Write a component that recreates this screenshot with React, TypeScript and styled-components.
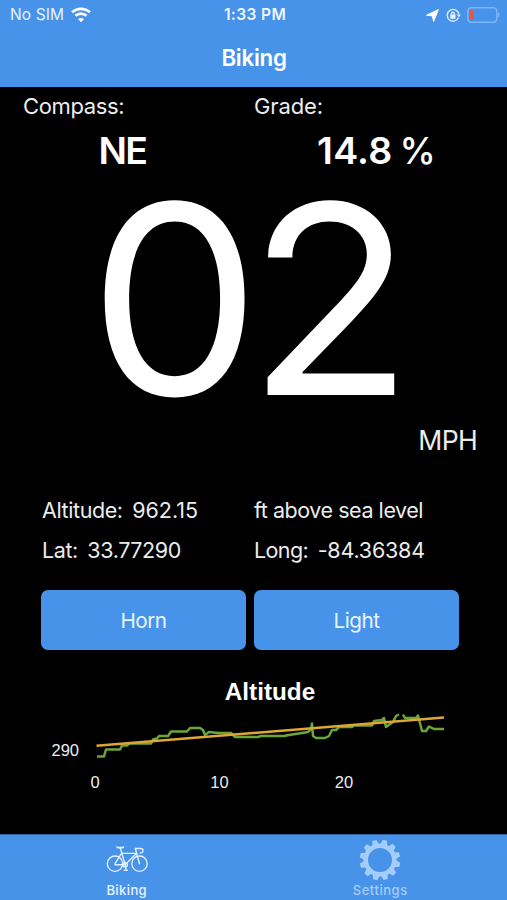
import React from "react";
import styled, { createGlobalStyle } from "styled-components";

const BLUE = "#4893ea";

const GlobalStyle = createGlobalStyle`
  * { box-sizing: border-box; }
  html, body { margin: 0; background: #000; }
  body { font-family: Inter, "Liberation Sans", sans-serif; color: #fff; }
`;

const Screen = styled.div`
  width: 507px;
  height: 900px;
  overflow: hidden;
  display: flex;
  flex-direction: column;
  background: #000;
`;

const Header = styled.header`
  height: 87px;
  flex: none;
  background: ${BLUE};
`;

const StatusBar = styled.div`
  height: 30px;
  padding: 0 7px 0 10px;
  display: grid;
  grid-template-columns: 1fr auto 1fr;
  align-items: center;
  font-size: 15.5px;
  line-height: 30px;
`;

const Carrier = styled.div`
  display: flex;
  align-items: center;
  gap: 7px;
  color: #e6f2ff;
  letter-spacing: 0.1px;
`;

const Clock = styled.div`
  font-weight: 600;
  letter-spacing: 0.4px;
  color: #edf6ff;
`;

const StatusIcons = styled.div`
  display: flex;
  align-items: center;
  justify-content: flex-end;
  gap: 6.5px;
`;

const NavTitle = styled.h1`
  margin: 0;
  height: 56px;
  line-height: 56px;
  padding-left: 1px;
  text-align: center;
  font-size: 22.3px;
  font-weight: 600;
  letter-spacing: -0.25px;
`;

const Main = styled.main`
  flex: 1;
  display: flex;
  flex-direction: column;
`;

const Readings = styled.section`
  height: 86px;
  padding: 6px 22px 0 23px;
  display: grid;
  grid-template-columns: 231px 231px;
  grid-template-rows: 26px 54px;
`;

const Label = styled.div<{ $spacing?: number }>`
  font-size: 22px;
  line-height: 26px;
  letter-spacing: ${(p) => p.$spacing ?? 0}px;
  white-space: nowrap;
  color: #ececec;
`;

const Reading = styled.div<{ $spacing: number; $width: number }>`
  width: ${(p) => p.$width}px;
  padding-top: 9px;
  display: flex;
  justify-content: center;
  gap: 7px;
  font-size: 37.5px;
  font-weight: 600;
  line-height: 46px;
  letter-spacing: ${(p) => p.$spacing}px;
  white-space: nowrap;
`;

const Percent = styled.span`
  font-size: 36.5px;
  font-weight: 500;
`;

const Speed = styled.div`
  height: 252px;
  line-height: 252px;
  padding-right: 18px;
  text-align: center;
  font-size: 264px;
  font-weight: 400;
  letter-spacing: -13.3px;
  transform: scaleX(1.035);
`;

const Unit = styled.div`
  height: 32px;
  line-height: 31px;
  padding-right: 30px;
  text-align: right;
  font-size: 26.6px;
  letter-spacing: -0.7px;
  color: #ececec;
`;

const Details = styled.section`
  margin: 36px 42px 0;
  display: grid;
  grid-template-columns: 212px 1fr;
  grid-auto-rows: 40px;
`;

const Detail = styled.div`
  display: flex;
  gap: 9.5px;
  font-size: 21.5px;
  line-height: 34px;
  white-space: nowrap;
  color: #ececec;
`;

const DetailText = styled.span<{ $spacing?: number }>`
  letter-spacing: ${(p) => p.$spacing ?? -0.4}px;
`;

const Actions = styled.section`
  margin: 17px 48px 0 41px;
  display: grid;
  grid-template-columns: 205px 205px;
  gap: 8px;
`;

const ActionButton = styled.button`
  height: 60px;
  border: 0;
  border-radius: 7px;
  padding: 0;
  background: ${BLUE};
  color: #e6f5ff;
  font: 400 20.7px Inter, "Liberation Sans", sans-serif;
  letter-spacing: -0.5px;
`;

const ChartCard = styled.section`
  font-family: "Liberation Sans", Arial, sans-serif;
`;

const ChartTitle = styled.h2`
  margin: 27px 0 0;
  padding-left: 33px;
  font-size: 24.3px;
  line-height: 30px;
  font-weight: 700;
  text-align: center;
`;

const Plot = styled.div`
  margin-top: 1px;
  display: grid;
  grid-template-columns: 79px 348px;
  column-gap: 17px;
`;

const YTick = styled.div`
  padding-top: 32px;
  text-align: right;
  font-size: 16.5px;
  line-height: 20px;
  color: #ececec;
`;

const XAxis = styled.div`
  margin: 8px 0 0 70px;
  display: grid;
  grid-template-columns: 50px 1fr 50px;
  width: 299px;
  text-align: center;
  font-size: 16.5px;
  line-height: 20px;
  color: #ececec;
`;

const TabBar = styled.nav`
  height: 66px;
  flex: none;
  display: grid;
  grid-template-columns: 1fr 1fr;
  background: ${BLUE};
  border-top: 1px solid #2b62a2;
`;

const Tab = styled.div<{ $active?: boolean }>`
  display: flex;
  flex-direction: column;
  align-items: center;
  color: ${(p) => (p.$active ? "#e8f4ff" : "#a5cdf9")};
  font-size: 13px;
  font-weight: 500;
  line-height: 16px;
  letter-spacing: ${(p) => (p.$active ? 0.4 : 0.55)}px;
`;

const TabIcon = styled.div<{ $active?: boolean }>`
  height: 47px;
  padding-top: ${(p) => (p.$active ? 0 : 2)}px;
  padding-left: ${(p) => (p.$active ? 2 : 0)}px;
  display: flex;
  align-items: center;
`;

const WifiIcon = () => (
  <svg width="20" height="16" viewBox="0 0 20 16" fill="none" stroke="#fff" strokeWidth="2.7">
    <path d="M1.1 5.3C6.1.6 13.9.6 18.9 5.3" />
    <path d="M4.5 8.8c3.2-2.9 7.8-2.9 11 0" />
    <path d="M10 15.2l-3-3.1c1.8-1.5 4.2-1.5 6 0z" fill="#fff" stroke="none" />
  </svg>
);

const LocationIcon = () => (
  <svg width="13" height="13" viewBox="0 0 13 13">
    <path d="M12.4.6L7.6 12.4 6.4 6.9.6 6.2z" fill="#fff" stroke="#fff" strokeWidth="1" strokeLinejoin="round" />
  </svg>
);

const RotationLockIcon = () => (
  <svg width="15" height="15" viewBox="0 0 15 15" fill="none" stroke="#d8eaff" strokeWidth="1.4">
    <path d="M12.5 9.8A5.9 5.9 0 1 1 12.9 6" />
    <path d="M10.7 6.5h4.3l-2.1 3z" fill="#d8eaff" stroke="none" />
    <rect x="4.3" y="6.5" width="5.2" height="4.2" rx=".6" fill="#e8f4ff" stroke="none" />
    <path d="M5.4 7V5.7a1.5 1.5 0 0 1 3 0V7" />
  </svg>
);

const BatteryIcon = () => (
  <svg width="33" height="17" viewBox="0 0 33 17">
    <rect x=".8" y=".8" width="29" height="14.5" rx="3.5" fill="none" stroke="#7db6f7" strokeWidth="1.5" />
    <rect x="2.8" y="3" width="3.8" height="10" rx="1.3" fill="#e35749" />
    <path d="M31.2 5.5v5c2-.6 2-4.4 0-5z" fill="#7db6f7" />
  </svg>
);

const BikeIcon = () => (
  <svg width="43" height="28" viewBox="0 0 43 28" fill="none" stroke="#e3f1ff" strokeWidth="1.35" strokeLinejoin="round" strokeLinecap="round">
    <circle cx="9" cy="18.7" r="7.7" />
    <circle cx="33.5" cy="18.7" r="7.7" />
    <path d="M9 18.7L15.5 8.3H30.7L19.2 19.7H9" />
    <path d="M14.2 2.6L19.2 19.7M33.5 18.7L29.3 3.5H35c2.5 0 2.8 4.3.2 4.3h-1.2" />
    <path d="M11.3 2.3c2 .5 4.4.4 6 0" strokeWidth="1.9" />
    <circle cx="19.2" cy="19.7" r="2.2" />
    <path d="M19.2 19.7l.8 5.2M18.3 25.2h3" />
  </svg>
);

const TEETH = Array.from({ length: 12 }, (_, i) => i * 30 + 14);

const GearIcon = () => (
  <svg width="42" height="42" viewBox="-21 -21 42 42">
    <circle r="14.3" fill="none" stroke="#a5cdf9" strokeWidth="4.6" />
    {TEETH.map((angle) => (
      <path key={angle} transform={`rotate(${angle})`} d="M-3.3-15.8L-2.2-20.3H2.2L3.3-15.8z" fill="#a5cdf9" />
    ))}
  </svg>
);

const AltitudeChart = () => (
  <svg width="348" height="56" viewBox="96 708 348 56" fill="none" strokeWidth="2.5" strokeLinejoin="round">
    <path
      stroke="#6aa638"
      d="M97 756.5H104L106 749.5H120L122 745.5H127L129 743.5H151L153 739.5L157 738.5L159 736H168L171 731.5H187L190 728H200L203 730L205 735L209 732L218 733H231L235 737H243L254 737H258L261 736H284L289 735L302 733L308 732L311 729.5L312 723.5L313 736L316 738H325L329 736L332 730H336L339 727H352L354 725.5H372L374 721L382 720L384 718L386 727L393 722L396 716L399 714.5M403 714.5L405 718H416L418 715.5L422 731H426L429 726.5L434 729H444"
    />
    <path stroke="#dda637" d="M96.5 745.7L444 717.5" />
  </svg>
);

export default function App() {
  return (
    <>
      <GlobalStyle />
      <Screen>
        <Header>
          <StatusBar>
            <Carrier>No SIM<WifiIcon /></Carrier>
            <Clock>1:33 PM</Clock>
            <StatusIcons>
              <LocationIcon />
              <RotationLockIcon />
              <BatteryIcon />
            </StatusIcons>
          </StatusBar>
          <NavTitle>Biking</NavTitle>
        </Header>
        <Main>
          <Readings>
            <Label $spacing={-0.35}>Compass:</Label>
            <Label $spacing={-0.1}>Grade:</Label>
            <Reading $width={199} $spacing={-1.6}>NE</Reading>
            <Reading $width={245} $spacing={0.2}>
              <span>14.8</span>
              <Percent>%</Percent>
            </Reading>
          </Readings>
          <Speed>02</Speed>
          <Unit>MPH</Unit>
          <Details>
            <Detail><DetailText>Altitude:</DetailText><DetailText $spacing={0}>962.15</DetailText></Detail>
            <Detail><DetailText $spacing={-0.45}>ft above sea level</DetailText></Detail>
            <Detail><DetailText>Lat:</DetailText><DetailText $spacing={-0.4}>33.77290</DetailText></Detail>
            <Detail><DetailText $spacing={-0.6}>Long:</DetailText><DetailText $spacing={-0.2}>-84.36384</DetailText></Detail>
          </Details>
          <Actions>
            <ActionButton>Horn</ActionButton>
            <ActionButton>Light</ActionButton>
          </Actions>
          <ChartCard>
            <ChartTitle>Altitude</ChartTitle>
            <Plot>
              <YTick>290</YTick>
              <AltitudeChart />
            </Plot>
            <XAxis><span>0</span><span>10</span><span>20</span></XAxis>
          </ChartCard>
        </Main>
        <TabBar>
          <Tab $active>
            <TabIcon $active><BikeIcon /></TabIcon>
            Biking
          </Tab>
          <Tab>
            <TabIcon><GearIcon /></TabIcon>
            Settings
          </Tab>
        </TabBar>
      </Screen>
    </>
  );
}
